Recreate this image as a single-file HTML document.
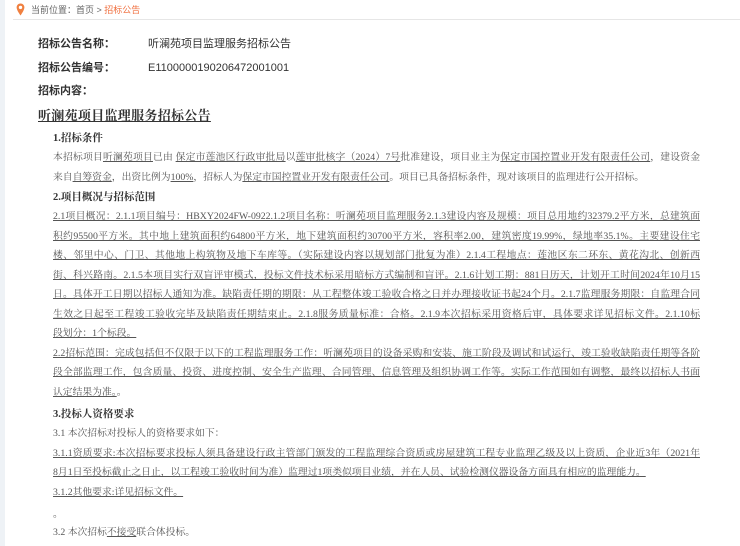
<!DOCTYPE html>
<html><head><meta charset="utf-8">
<style>
body{margin:0;width:740px;height:546px;overflow:hidden;background:#fff;position:relative;font-family:"Liberation Serif","Noto Serif CJK SC",serif;color:#444;}
.strip{position:absolute;left:0;top:0;width:5px;height:546px;background:#eef2f6;}
.bc{position:absolute;left:31px;top:3px;font-family:"Liberation Sans","Noto Sans CJK SC",sans-serif;font-size:9px;color:#666;line-height:14px;}
.bc .cur{color:#f07040;}
.sep{position:absolute;left:13px;right:0;top:19px;height:1px;background:#e6e6e6;}
.lab{position:absolute;left:38px;font-family:"Liberation Sans","Noto Sans CJK SC",sans-serif;font-size:11px;font-weight:bold;color:#333;line-height:14px;}
.val{position:absolute;left:148px;font-family:"Liberation Sans","Noto Sans CJK SC",sans-serif;font-size:11px;color:#333;line-height:14px;}
.title{position:absolute;left:38px;top:108px;font-size:13px;font-weight:bold;color:#333;text-decoration:underline;line-height:16px;letter-spacing:0.3px;}
.ln{position:absolute;left:53px;width:647px;font-size:9.8px;line-height:14px;white-space:nowrap;text-align:justify;text-align-last:justify;color:#555;}
.ln.l{text-align-last:left;}
.h{font-weight:bold;color:#333;font-size:10.5px;}
u{text-decoration:underline;}
.uall{text-decoration:underline;}
</style></head><body>
<div class="strip"></div>
<svg style="position:absolute;left:16px;top:3px" width="9" height="13" viewBox="0 0 9 13"><path d="M4.5 0.5C2.3 0.5 0.6 2.2 0.6 4.4C0.6 7.3 4.5 12.5 4.5 12.5C4.5 12.5 8.4 7.3 8.4 4.4C8.4 2.2 6.7 0.5 4.5 0.5Z" fill="#f08040"/><circle cx="4.5" cy="4.4" r="1.7" fill="#fff"/></svg>
<div class="bc">当前位置：首页 &gt; <span class="cur">招标公告</span></div>
<div class="sep"></div>
<div class="lab" style="top:37px">招标公告名称：</div><div class="val" style="top:37px">听澜苑项目监理服务招标公告</div>
<div class="lab" style="top:61px">招标公告编号：</div><div class="val" style="top:61px">E1100000190206472001001</div>
<div class="lab" style="top:84px">招标内容：</div>
<div class="title">听澜苑项目监理服务招标公告</div>

<div class="ln l h" style="top:132px">1.招标条件</div>
<div class="ln" style="top:151px">本招标项目<u>听澜苑项目</u>已由 <u>保定市莲池区行政审批局</u>以<u>莲审批核字（2024）7号</u>批准建设，项目业主为<u>保定市国控置业开发有限责任公司</u>，建设资金</div>
<div class="ln l" style="top:171px">来自<u>自筹资金</u>，出资比例为<u>100%</u>，招标人为<u>保定市国控置业开发有限责任公司</u>。项目已具备招标条件，现对该项目的监理进行公开招标。</div>
<div class="ln l h" style="top:191px">2.项目概况与招标范围</div>
<div class="ln uall" style="top:210px">2.1项目概况：2.1.1项目编号：HBXY2024FW-0922.1.2项目名称：听澜苑项目监理服务2.1.3建设内容及规模：项目总用地约32379.2平方米，总建筑面</div>
<div class="ln uall" style="top:230px">积约95500平方米。其中地上建筑面积约64800平方米，地下建筑面积约30700平方米，容积率2.00，建筑密度19.99%，绿地率35.1%。主要建设住宅</div>
<div class="ln uall" style="top:249px">楼、邻里中心、门卫、其他地上构筑物及地下车库等。（实际建设内容以规划部门批复为准）2.1.4工程地点：莲池区东二环东、黄花沟北、创新西</div>
<div class="ln uall" style="top:269px">街、科兴路南。2.1.5本项目实行双盲评审模式，投标文件技术标采用暗标方式编制和盲评。2.1.6计划工期：881日历天，计划开工时间2024年10月15</div>
<div class="ln uall" style="top:288px">日。具体开工日期以招标人通知为准。缺陷责任期的期限：从工程整体竣工验收合格之日并办理接收证书起24个月。2.1.7监理服务期限：自监理合同</div>
<div class="ln uall" style="top:308px">生效之日起至工程竣工验收完毕及缺陷责任期结束止。2.1.8服务质量标准：合格。2.1.9本次招标采用资格后审，具体要求详见招标文件。2.1.10标</div>
<div class="ln l" style="top:327px"><u>段划分：1个标段。</u></div>
<div class="ln uall" style="top:347px">2.2招标范围：完成包括但不仅限于以下的工程监理服务工作：听澜苑项目的设备采购和安装、施工阶段及调试和试运行、竣工验收缺陷责任期等各阶</div>
<div class="ln uall" style="top:366px">段全部监理工作，包含质量、投资、进度控制、安全生产监理、合同管理、信息管理及组织协调工作等。实际工作范围如有调整，最终以招标人书面</div>
<div class="ln l" style="top:386px"><u>认定结果为准。</u>。</div>
<div class="ln l h" style="top:408px">3.投标人资格要求</div>
<div class="ln l" style="top:427px">3.1 本次招标对投标人的资格要求如下：</div>
<div class="ln uall" style="top:447px">3.1.1资质要求:本次招标要求投标人须具备建设行政主管部门颁发的工程监理综合资质或房屋建筑工程专业监理乙级及以上资质，企业近3年（2021年</div>
<div class="ln l" style="top:466px"><u>8月1日至投标截止之日止，以工程竣工验收时间为准）监理过1项类似项目业绩，并在人员、试验检测仪器设备方面具有相应的监理能力。</u></div>
<div class="ln l" style="top:486px"><u>3.1.2其他要求:详见招标文件。</u></div>
<div class="ln l" style="top:508px">。</div>
<div class="ln l" style="top:526px">3.2 本次招标<u>不接受</u>联合体投标。</div>
</body></html>
